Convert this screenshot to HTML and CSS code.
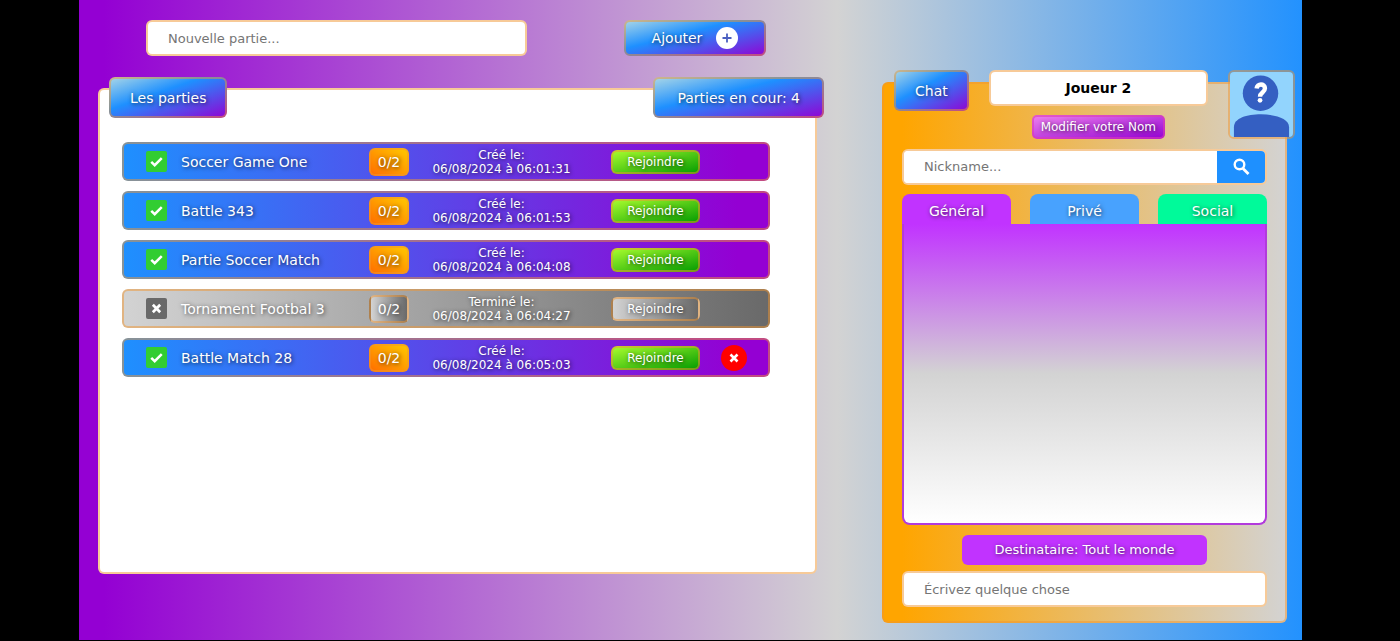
FILE: index.html
```html
<!DOCTYPE html>
<html lang="fr">
<head>
<meta charset="utf-8">
<meta name="viewport" content="width=device-width, initial-scale=1">
<title>Les parties</title>
<link rel="stylesheet" href="styles.css">
</head>
<body>
<svg class="sprite" aria-hidden="true">
  <symbol id="check" viewBox="0 0 20 20"><path d="M5 10.3l3.3 3.2L15 6.800" fill="none" stroke="currentColor" stroke-width="2.400"/></symbol>
  <symbol id="cross" viewBox="0 0 20 20"><path d="M6.500 6.500l7 7M13.500 6.500l-7 7" fill="none" stroke="currentColor" stroke-width="2.600"/></symbol>
</svg>
<div class="stage">
  <main class="lobby">
    <form class="create">
      <input class="field create-field" type="text" placeholder="Nouvelle partie..." aria-label="Nouvelle partie">
      <button class="btn create-btn" type="button">Ajouter
        <svg class="plus" viewBox="0 0 22 22" aria-hidden="true"><circle cx="11" cy="11" r="11" fill="#fff"/><path d="M11 6.500v9M6.500 11h9" stroke="#4a5fc0" stroke-width="1.800"/></svg>
      </button>
    </form>
    <section class="games">
      <header class="games-head">
        <h1 class="label">Les parties</h1>
        <p class="label total">Parties en cour: 4</p>
      </header>
      <ul class="list">
        <li class="game">
          <svg class="state"><use href="#check"/></svg>
          <span class="name">Soccer Game One</span><span class="count">0/2</span>
          <span class="date">Créé le:<br>06/08/2024 à 06:01:31</span>
          <button class="join" type="button">Rejoindre</button>
        </li>
        <li class="game">
          <svg class="state"><use href="#check"/></svg>
          <span class="name">Battle 343</span><span class="count">0/2</span>
          <span class="date">Créé le:<br>06/08/2024 à 06:01:53</span>
          <button class="join" type="button">Rejoindre</button>
        </li>
        <li class="game">
          <svg class="state"><use href="#check"/></svg>
          <span class="name">Partie Soccer Match</span><span class="count">0/2</span>
          <span class="date">Créé le:<br>06/08/2024 à 06:04:08</span>
          <button class="join" type="button">Rejoindre</button>
        </li>
        <li class="game ended">
          <svg class="state"><use href="#cross"/></svg>
          <span class="name">Tornament Footbal 3</span><span class="count">0/2</span>
          <span class="date">Terminé le:<br>06/08/2024 à 06:04:27</span>
          <button class="join" type="button">Rejoindre</button>
        </li>
        <li class="game">
          <svg class="state"><use href="#check"/></svg>
          <span class="name">Battle Match 28</span><span class="count">0/2</span>
          <span class="date">Créé le:<br>06/08/2024 à 06:05:03</span>
          <button class="join" type="button">Rejoindre</button>
          <button class="remove" type="button" aria-label="Supprimer"><svg viewBox="0 0 20 20"><use href="#cross"/></svg></button>
        </li>
      </ul>
    </section>
  </main>
  <aside class="chat">
    <header class="chat-head">
      <h2 class="label">Chat</h2>
      <div class="player">
        <p class="field player-name">Joueur 2</p>
        <button class="rename" type="button">Modifier votre Nom</button>
      </div>
      <svg class="avatar" viewBox="0 0 64 66" role="img" aria-label="Avatar">
        <rect width="64" height="66" fill="#92d4fd"/>
        <circle cx="31" cy="21.500" r="18" fill="#345fc2"/>
        <path d="M4 66V56C4 47 17 43 31.500 43S60 47 60 56v10z" fill="#345fc2"/>
        <path d="M27 16.800c.5-5.500 8.500-5.300 8.500-.3 0 4.500-5 4-5 8.500" fill="none" stroke="#fff" stroke-width="4.500"/>
        <circle cx="30.500" cy="28.800" r="2.400" fill="#fff"/>
      </svg>
    </header>
    <form class="search">
      <input class="search-field" type="search" placeholder="Nickname..." aria-label="Nickname">
      <button class="search-btn" type="button" aria-label="Rechercher">
        <svg viewBox="0 0 18 18"><circle cx="7.500" cy="6.500" r="4.800" fill="none" stroke="#fff" stroke-width="2.400"/><path d="M11 10.500l5.500 5.500" stroke="#fff" stroke-width="2.800"/></svg>
      </button>
    </form>
    <nav class="tabs">
      <button class="tab general" type="button">Général</button>
      <button class="tab private" type="button">Privé</button>
      <button class="tab social" type="button">Social</button>
    </nav>
    <div class="messages"></div>
    <p class="recipient">Destinataire: Tout le monde</p>
    <input class="field" type="text" placeholder="Écrivez quelque chose" aria-label="Message">
  </aside>
</div>
</body>
</html>
```
FILE: styles.css
```css
:root {
  --edge: rgba(240, 150, 50, .5);
  --shade: 1px 1px 4px rgba(0, 0, 0, .7);
}
* { box-sizing: border-box; }
body {
  margin: 0;
  background: #000;
  font-family: "DejaVu Sans", Verdana, sans-serif;
  font-size: 14px;
  line-height: 14px;
}
h1, h2, p, ul { margin: 0; padding: 0; font-size: 14px; font-weight: 400; }
button, input { font: inherit; }
input { font-size: 13px; }
button { cursor: pointer; padding: 0; }
input::placeholder { color: #757575; opacity: 1; }
.sprite { position: absolute; width: 0; height: 0; }

.stage {
  display: grid;
  grid-template-columns: 719fr 405fr;
  gap: 65px;
  min-height: calc(100vh - 1px);
  margin: 0 7% 1px 79px;
  padding: 0 15px 0 19px;
  background: linear-gradient(to right, darkviolet 2%, lightgray 62%, dodgerblue 101%);
}
.field {
  height: 36px;
  padding: 0 20px;
  border: 2px solid var(--edge);
  border-radius: 6px;
  background: #fff;
}
.btn, .label {
  display: flex;
  align-items: center;
  justify-content: center;
  border: 2px solid var(--edge);
  border-radius: 6px;
  background: linear-gradient(to bottom right, lightblue, dodgerblue 40%, darkviolet) border-box;
  color: #fff;
  text-shadow: var(--shade);
}
.label { height: 41px; padding: 0 19px; }

.lobby { display: flex; flex-direction: column; padding: 20px 0 66px; }
.create { display: flex; justify-content: space-between; padding: 0 51px 0 48px; }
.create-field { width: 381px; }
.create-btn { width: 142px; height: 36px; gap: 14px; }
.plus { width: 22px; height: 22px; }
.games {
  flex: 1;
  margin-top: 32px;
  border: 2px solid var(--edge);
  border-radius: 6px;
  background: #fff;
}
.games-head { display: flex; justify-content: space-between; margin: -13px -9px 0 9px; }
.total { padding: 0 22px; }
.list { display: grid; gap: 10px; margin: 24px 45px 24px 22px; list-style: none; }
.game {
  display: grid;
  grid-template-columns: 21px 202px 40px 185px 106px 1fr;
  align-items: center;
  height: 39px;
  padding-left: 22px;
  border: 2px solid var(--edge);
  border-radius: 6px;
  background: linear-gradient(to right, dodgerblue, darkviolet 95%) border-box;
  color: #fff;
  text-shadow: var(--shade);
}
.state { width: 21px; height: 21px; border-radius: 2px; background: limegreen; color: #fff; }
.name { padding-left: 14px; }
.count {
  height: 28px;
  border: 2px solid var(--edge);
  border-radius: 6px;
  background: linear-gradient(to top right, #ff6a00, #ffcc00) border-box;
  line-height: 24px;
  text-align: center;
}
.date { font-size: 12px; text-align: center; }
.join {
  justify-self: end;
  width: 89px;
  height: 24px;
  border: 2px solid var(--edge);
  border-radius: 6px;
  background: linear-gradient(to bottom right, greenyellow, #009a00) border-box;
  color: #fff;
  font-size: 12px;
  text-shadow: var(--shade);
}
.remove {
  justify-self: center;
  width: 26px;
  height: 26px;
  border: 0;
  border-radius: 50%;
  background: red;
  color: #fff;
}
.remove svg { display: block; width: 20px; height: 20px; margin: 0 auto; }
.ended { background: linear-gradient(to right, lightgray, dimgray) border-box; }
.ended .state { background: dimgray; }
.ended .count, .ended .join { background: linear-gradient(to right, lightgray, dimgray); }

.chat {
  display: flex;
  flex-direction: column;
  margin: 82px 0 17px;
  padding: 0 18px 14px;
  border: 2px solid var(--edge);
  border-radius: 6px;
  background: linear-gradient(to right, orange 5%, lightgray) border-box;
}
.chat-head { display: flex; align-items: flex-start; margin: -14px -28px 0 -8px; }
.player { flex: 1; display: flex; flex-direction: column; align-items: center; margin: 0 20px; }
.player-name { width: 100%; font-weight: 700; line-height: 33px; text-align: center; }
.rename {
  width: 133px;
  height: 24px;
  margin-top: 9px;
  border: 2px solid rgba(220, 60, 180, .6);
  border-radius: 5px;
  background: linear-gradient(to bottom right, violet, darkviolet) border-box;
  color: #fff;
  font-size: 12px;
  text-shadow: var(--shade);
}
.avatar { width: 67px; height: 69px; border: 2px solid var(--edge); border-radius: 6px; }
.search {
  display: flex;
  height: 36px;
  margin-top: 10px;
  border: 2px solid var(--edge);
  border-radius: 6px;
  background: #fff;
  overflow: hidden;
}
.search-field { flex: 1; min-width: 0; padding: 0 20px; border: 0; background: #fff; }
.search-btn { width: 48px; border: 0; background: dodgerblue; }
.search-btn svg { display: block; width: 18px; height: 18px; margin: 0 auto; }
.tabs { display: grid; grid-template-columns: repeat(3, 1fr); gap: 19px; margin-top: 9px; }
.tab {
  height: 30px;
  padding-top: 4px;
  border: 0;
  border-radius: 8px 8px 0 0;
  color: #fff;
  text-shadow: var(--shade);
}
.general { background: #c133ff; }
.private { background: #48a2fe; }
.social { background: #00fa9a; }
.messages {
  flex: 1;
  border: 2px solid #b23bdc;
  border-top: 0;
  border-radius: 0 0 8px 8px;
  background: linear-gradient(to bottom, #c133ff, lightgray 50%, #fff);
}
.recipient {
  align-self: center;
  width: 245px;
  margin: 10px 0 6px;
  border-radius: 6px;
  background: #c133ff;
  color: #fff;
  font-size: 13px;
  line-height: 30px;
  text-align: center;
  text-shadow: var(--shade);
}
```
